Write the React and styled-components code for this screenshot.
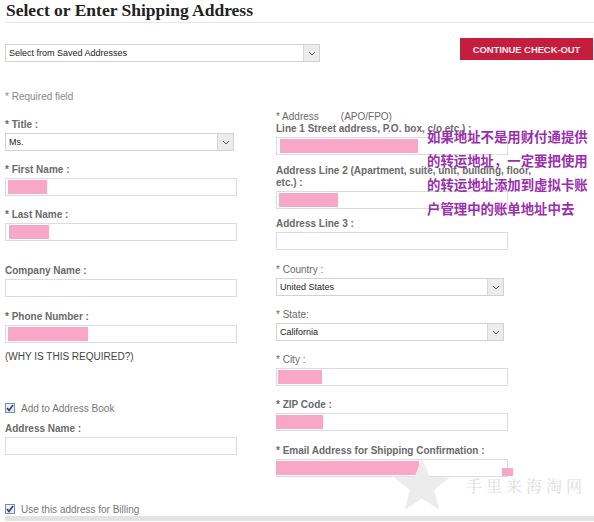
import React from "react";
import styled, { createGlobalStyle } from "styled-components";

const GlobalStyle = createGlobalStyle`
  html, body {
    margin: 0;
    padding: 0;
    background: #fff;
  }
  * {
    box-sizing: border-box;
  }
`;

const Page = styled.div`
  position: relative;
  width: 594px;
  height: 522px;
  overflow: hidden;
  padding: 0 0 0 5px;
  font-family: "Liberation Sans", Arial, sans-serif;
`;

const Title = styled.h1`
  margin: 0;
  padding-left: 1px;
  height: 20px;
  line-height: 20px;
  font-family: "Liberation Serif", "Times New Roman", serif;
  font-size: 17.5px;
  font-weight: bold;
  color: #222;
`;

const Divider = styled.div`
  height: 1px;
  margin-top: 2px;
  background: #e6e6e6;
`;

const TopRow = styled.div`
  display: flex;
  align-items: flex-start;
  margin-top: 15px;
  padding-right: 1px;
`;

const SelectBox = styled.div`
  display: flex;
  align-items: center;
  width: ${({ width }) => width}px;
  height: 18px;
  margin-top: ${({ top }) => top || 0}px;
  border: 1px solid #d2d2d2;
  background: #fff;
`;

const SelectText = styled.span`
  flex: 1;
  padding-left: 3px;
  font-size: 9px;
  color: #222;
  white-space: nowrap;
`;

const Arrow = styled.span`
  display: flex;
  align-items: center;
  justify-content: center;
  width: 16px;
  height: 100%;
  background: #ececec;
  border-left: 1px solid #d6d6d6;
`;

const CheckoutButton = styled.button`
  margin-left: auto;
  width: 133px;
  height: 22px;
  border: none;
  padding: 0;
  background: #c51d3d;
  color: #fbe9ec;
  font-family: "Liberation Sans", Arial, sans-serif;
  font-size: 9.5px;
  font-weight: bold;
  letter-spacing: -0.1px;
`;

const Columns = styled.div`
  display: grid;
  grid-template-columns: 232px 232px;
  column-gap: 39px;
  align-items: start;
  margin-top: 29px;
`;

const Column = styled.div`
  display: flex;
  flex-direction: column;
  padding-top: ${({ top }) => top || 0}px;
`;

const Note = styled.div`
  height: 12px;
  line-height: 12px;
  margin-top: ${({ top }) => top || 0}px;
  font-size: 10px;
  color: ${({ dark }) => (dark ? "#444" : "#888")};
  white-space: nowrap;
`;

const Field = styled.div`
  display: flex;
  flex-direction: column;
  margin-top: ${({ top }) => top || 0}px;
`;

const Label = styled.div`
  line-height: 12px;
  font-size: 10px;
  font-weight: ${({ light }) => (light ? "normal" : "bold")};
  color: #6a6a6a;
  white-space: nowrap;
  margin-bottom: 2px;
`;

const Spacer = styled.span`
  display: inline-block;
  width: 22px;
`;

const Input = styled.div`
  position: relative;
  width: ${({ width }) => width || 232}px;
  height: 18px;
  border: 1px solid #dcdcdc;
  background: #fff;
`;

const Filled = styled.span`
  position: absolute;
  left: ${({ left }) => left}px;
  top: 1px;
  bottom: 1px;
  background: #f8a8c6;
`;

const CheckRow = styled.label`
  display: flex;
  align-items: center;
  gap: 6px;
  height: 12px;
  margin-top: ${({ top }) => top || 0}px;
  font-size: 10px;
  color: #777;
  white-space: nowrap;
`;

const Box = styled.span`
  display: flex;
  align-items: center;
  justify-content: center;
  width: 10px;
  height: 10px;
  border: 1px solid #7d8fb0;
  background: linear-gradient(#f3f5fa, #dfe4ee);
`;

const BottomBar = styled.div`
  height: 5px;
  margin-top: 1px;
  background: #e2e2e2;
`;

const Annotation = styled.div`
  position: absolute;
  left: 427px;
  top: 124px;
  font-family: "Noto Sans CJK SC", sans-serif;
  font-size: 13.4px;
  font-weight: bold;
  line-height: 24px;
  color: #9a2fac;
  white-space: nowrap;
`;

const PinkDot = styled.span`
  position: absolute;
  left: 502px;
  top: 468px;
  width: 11px;
  height: 8px;
  background: #f8a8c6;
`;

const Watermark = styled.div`
  position: absolute;
  left: 392px;
  top: 456px;
  display: flex;
  align-items: center;
  gap: 14px;
  pointer-events: none;
`;

const WatermarkText = styled.span`
  font-family: "Noto Serif CJK SC", "Noto Sans CJK SC", serif;
  font-size: 16px;
  letter-spacing: 4px;
  color: #dedede;
  margin-top: 2px;
`;

function Chevron() {
  return (
    <svg width="8" height="5" viewBox="0 0 8 5">
      <path d="M1 1 L4 4 L7 1" fill="none" stroke="#555" strokeWidth="1" />
    </svg>
  );
}

function Select({ width, top, value }) {
  return (
    <SelectBox width={width} top={top}>
      <SelectText>{value}</SelectText>
      <Arrow>
        <Chevron />
      </Arrow>
    </SelectBox>
  );
}

function Check({ top, children }) {
  return (
    <CheckRow top={top}>
      <Box>
        <svg width="8" height="8" viewBox="0 0 8 8">
          <path d="M1 4 L3 6.5 L7 1" fill="none" stroke="#2b3f7a" strokeWidth="1.6" />
        </svg>
      </Box>
      {children}
    </CheckRow>
  );
}

function TextField({ top, label, light, fill, fillLeft = 2 }) {
  return (
    <Field top={top}>
      <Label light={light}>{label}</Label>
      <Input>{fill ? <Filled left={fillLeft} style={{ width: fill }} /> : null}</Input>
    </Field>
  );
}

export default function App() {
  return (
    <Page>
      <GlobalStyle />
      <Title>Select or Enter Shipping Address</Title>
      <Divider />
      <TopRow>
        <Select width={315} top={6} value="Select from Saved Addresses" />
        <CheckoutButton>CONTINUE CHECK-OUT</CheckoutButton>
      </TopRow>

      <Columns>
        <Column>
          <Note>* Required field</Note>
          <Field top={16}>
            <Label>* Title :</Label>
            <Select width={229} value="Ms." />
          </Field>
          <TextField top={13} label="* First Name :" fill={39} />
          <TextField top={13} label="* Last Name :" fill={40} fillLeft={3} />
          <TextField top={24} label="Company Name :" />
          <TextField top={14} label="* Phone Number :" fill={80} />
          <Note top={8} dark>
            (WHY IS THIS REQUIRED?)
          </Note>
          <Check top={39}>Add to Address Book</Check>
          <TextField top={9} label="Address Name :" />
        </Column>

        <Column top={20}>
          <Field>
            <Label light>
              * Address<Spacer />(APO/FPO)
            </Label>
            <Label style={{ marginTop: -2 }}>Line 1 Street address, P.O. box, c/o etc.) :</Label>
            <Input>
              <Filled left={3} style={{ width: 138 }} />
            </Input>
          </Field>
          <Field top={10}>
            <Label>
              Address Line 2 (Apartment, suite, unit, building, floor,
              <br />
              etc.) :
            </Label>
            <Input>
              <Filled left={2} style={{ width: 59 }} />
            </Input>
          </Field>
          <TextField top={9} label="Address Line 3 :" />
          <Field top={14}>
            <Label light>* Country :</Label>
            <Select width={228} value="United States" />
          </Field>
          <Field top={13}>
            <Label light>* State:</Label>
            <Select width={228} value="California" />
          </Field>
          <TextField top={13} light label="* City :" fill={44} fillLeft={1} />
          <TextField top={13} label="* ZIP Code :" fill={47} fillLeft={-1} />
          <TextField top={14} label="* Email Address for Shipping Confirmation :" fill={143} fillLeft={-1} />
        </Column>
      </Columns>

      <Check top={26}>Use this address for Billing</Check>
      <BottomBar />

      <Watermark>
        <svg width="60" height="56" viewBox="0 0 60 56">
          <path
            d="M30 2 L37.5 21 L58 21.5 L42 34 L47.5 54 L30 42.5 L12.5 54 L18 34 L2 21.5 L22.5 21 Z"
            fill="#ececec"
          />
        </svg>
        <WatermarkText>手里来海淘网</WatermarkText>
      </Watermark>
      <PinkDot />

      <Annotation>
        如果地址不是用财付通提供
        <br />
        的转运地址，一定要把使用
        <br />
        的转运地址添加到虚拟卡账
        <br />
        户管理中的账单地址中去
      </Annotation>
    </Page>
  );
}
